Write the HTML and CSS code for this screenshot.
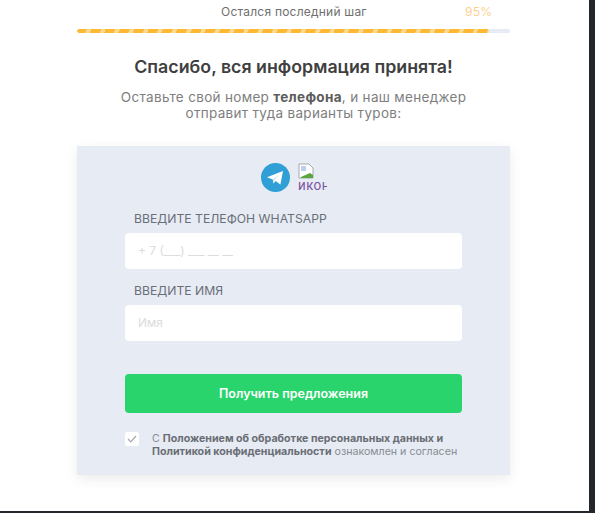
FILE: index.html
```html
<!DOCTYPE html>
<html lang="ru">
<head>
    <meta charset="UTF-8">
    <meta name="viewport" content="width=device-width, initial-scale=1.0">
    <title>Остался последний шаг</title>
    <link rel="stylesheet" href="styles.css">
</head>
<body>
    <div class="modal">
        <div class="container">
            <div class="progress-head">
                <span class="progress-title">Остался последний шаг</span>
                <span class="progress-value">95%</span>
            </div>
            <div class="progress">
                <div class="progress-fill"></div>
            </div>

            <h1>Спасибо, вся информация принята!</h1>
            <p class="lead">Оставьте свой номер <b>телефона</b>, и наш менеджер<br>отправит туда варианты туров:</p>

            <div class="card">
                <div class="messengers">
                    <svg class="tg-icon" width="29" height="29" viewBox="0 0 29 29">
                        <circle cx="14.5" cy="14.5" r="14.5" fill="#2f9fd6"/>
                        <path d="M6 14.2 L22 8 L19.4 21.4 L14.6 18 L12.4 20.4 L11.8 16.4 Z" fill="#fff"/>
                        <path d="M11.8 16.4 L19 10.8 L13.6 17.2 L12.4 20.4 Z" fill="#d5e6f2"/>
                    </svg>
                    <div class="broken-img">
                        <svg class="broken-glyph" width="16" height="16" viewBox="0 0 16 16">
                            <path d="M1 1 H11 L15 5 V15 H1 Z" fill="#fff" stroke="#a9a9a9"/>
                            <path d="M3 14 L12 10 L15 12 V15 H3 Z" fill="#5aa63c"/>
                            <path d="M3 3 H8 V8 H3 Z" fill="#bcd0ee"/>
                        </svg>
                        <span class="broken-alt">иконка</span>
                    </div>
                </div>

                <div class="form-group">
                    <label class="field-label">Введите телефон WhatsApp</label>
                    <div class="field">+ 7 (___) ___ __ __</div>
                </div>
                <div class="form-group">
                    <label class="field-label">Введите имя</label>
                    <div class="field">Имя</div>
                </div>

                <button class="btn">Получить предложения</button>

                <div class="agree">
                    <div class="checkbox">
                        <svg width="10" height="8" viewBox="0 0 10 8">
                            <path d="M1 4 L3.8 6.8 L9 1" fill="none" stroke="#a4a8b0" stroke-width="1.2"/>
                        </svg>
                    </div>
                    <p class="agree-text">С <b>Положением об обработке персональных данных и<br>Политикой конфиденциальности</b> ознакомлен и согласен</p>
                </div>
            </div>
        </div>
    </div>
</body>
</html>
```

FILE: styles.css
```css
html, body {
    margin: 0;
    height: 100%;
}
body {
    font-family: Inter, 'Open Sans', sans-serif;
    background: #23262b;
    overflow: hidden;
}
.modal {
    width: 589px;
    height: 511px;
    background: #fff;
    box-sizing: border-box;
    padding-left: 77px;
}
.container {
    width: 433px;
}
.progress-head {
    height: 29px;
    padding-top: 3px;
    box-sizing: border-box;
    display: flex;
    font-size: 12px;
    line-height: 17px;
    color: #6f6f6f;
    letter-spacing: 0.22px;
}
.progress-title {
    margin-left: 144px;
    width: 244px;
}
.progress-value {
    color: #fdd28f;
}
.progress {
    width: 433px;
    height: 4px;
    background: #e6ecf5;
    border-radius: 2px;
    overflow: hidden;
}
.progress-fill {
    width: 412px;
    height: 4px;
    border-radius: 2px;
    background: repeating-linear-gradient(115deg, #fdb933 0, #fdb933 9px, #fdd98f 9px, #fdd98f 13px);
}
h1 {
    margin: 22px 0 0;
    font-size: 17.8px;
    line-height: 24px;
    font-weight: 600;
    color: #3f3f3f;
    text-align: center;
}
.lead {
    margin: 10px 0 0;
    font-size: 13.5px;
    line-height: 16px;
    color: #7e7e7e;
    text-align: center;
    letter-spacing: 0.32px;
}
.lead b {
    font-weight: 700;
    color: #5c5c5c;
}
.card {
    margin-top: 25px;
    height: 329px;
    box-sizing: border-box;
    padding: 17px 48px 0;
    background: #e6ebf4;
    box-shadow: 0 4px 12px rgba(0, 0, 0, 0.08);
}
.messengers {
    display: flex;
    justify-content: center;
    height: 30px;
    padding-left: 1px;
}
.tg-icon {
    margin-right: 8px;
}
.broken-img {
    width: 29px;
    height: 30px;
    overflow: hidden;
    line-height: 0;
}
.broken-glyph {
    display: block;
}
.broken-alt {
    display: block;
    font-size: 13px;
    line-height: 13px;
    font-weight: 400;
    color: #7a4f9c;
    white-space: nowrap;
    letter-spacing: 0.5px;
}
.form-group {
    margin-bottom: 14px;
}
.messengers + .form-group {
    margin-top: 18px;
}
.field-label {
    display: block;
    padding-left: 9px;
    margin-bottom: 6px;
    font-size: 12.2px;
    line-height: 16px;
    color: #6b6f78;
    text-transform: uppercase;
}
.field {
    height: 36px;
    box-sizing: border-box;
    padding: 0 13px;
    background: #fff;
    border-radius: 4px;
    font-size: 12px;
    line-height: 36px;
    color: #dcdcdc;
}
.btn {
    display: block;
    width: 100%;
    height: 39px;
    margin-top: 33px;
    padding: 0;
    border: none;
    border-radius: 4px;
    background: #29d46c;
    color: #fff;
    font-family: inherit;
    font-size: 12.5px;
    font-weight: 600;
    cursor: pointer;
}
.agree {
    display: flex;
    margin-top: 19px;
}
.checkbox {
    width: 14px;
    height: 14px;
    border-radius: 2px;
    background: #fff;
    display: flex;
    align-items: center;
    justify-content: center;
    margin-right: 13px;
}
.agree-text {
    margin: 0;
    font-size: 10.65px;
    line-height: 13px;
    color: #8a8d94;
    white-space: nowrap;
}
.agree-text b {
    font-weight: 700;
    color: #6b6e75;
}
```
